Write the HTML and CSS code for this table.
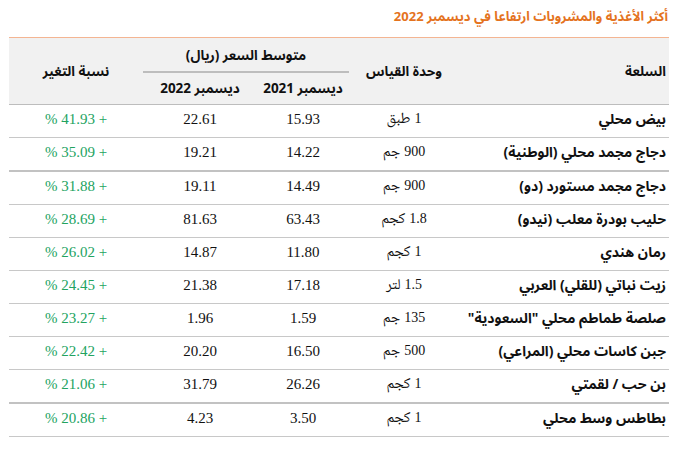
FILE: index.html
```html
<!DOCTYPE html>
<html lang="ar" dir="rtl">
<head>
<meta charset="utf-8">
<link rel="stylesheet" href="styles.css">
</head>
<body>
<div class="wrap">
  <h1 class="title">أكثر الأغذية والمشروبات ارتفاعا في ديسمبر 2022</h1>
  <table class="tbl">
    <colgroup>
      <col class="c-item"><col class="c-unit"><col class="c-p21"><col class="c-p22"><col class="c-chg">
    </colgroup>
    <thead>
      <tr class="h1">
        <th rowspan="2" class="th-item">السلعة</th>
        <th rowspan="2">وحدة القياس</th>
        <th colspan="2" class="th-price"><span class="price-label">متوسط السعر (ريال)</span></th>
        <th rowspan="2">نسبة التغير</th>
      </tr>
      <tr class="h2">
        <th>ديسمبر 2021</th>
        <th>ديسمبر 2022</th>
      </tr>
    </thead>
    <tbody>
      <tr><td class="item">بيض محلي</td><td class="unit"><span class="u"><span>1</span><span>طبق</span></span></td><td class="num">15.93</td><td class="num">22.61</td><td class="chg"><span class="pct">% 41.93 +</span></td></tr>
      <tr class="thick"><td class="item">دجاج مجمد محلي (الوطنية)</td><td class="unit"><span class="u"><span>900</span><span>جم</span></span></td><td class="num">14.22</td><td class="num">19.21</td><td class="chg"><span class="pct">% 35.09 +</span></td></tr>
      <tr><td class="item">دجاج مجمد مستورد (دو)</td><td class="unit"><span class="u"><span>900</span><span>جم</span></span></td><td class="num">14.49</td><td class="num">19.11</td><td class="chg"><span class="pct">% 31.88 +</span></td></tr>
      <tr><td class="item">حليب بودرة معلب (نيدو)</td><td class="unit"><span class="u"><span>1.8</span><span>كجم</span></span></td><td class="num">63.43</td><td class="num">81.63</td><td class="chg"><span class="pct">% 28.69 +</span></td></tr>
      <tr><td class="item">رمان هندي</td><td class="unit"><span class="u"><span>1</span><span>كجم</span></span></td><td class="num">11.80</td><td class="num">14.87</td><td class="chg"><span class="pct">% 26.02 +</span></td></tr>
      <tr><td class="item">زيت نباتي (للقلي) العربي</td><td class="unit"><span class="u"><span>1.5</span><span>لتر</span></span></td><td class="num">17.18</td><td class="num">21.38</td><td class="chg"><span class="pct">% 24.45 +</span></td></tr>
      <tr><td class="item">صلصة طماطم محلي "السعودية"</td><td class="unit"><span class="u"><span>135</span><span>جم</span></span></td><td class="num">1.59</td><td class="num">1.96</td><td class="chg"><span class="pct">% 23.27 +</span></td></tr>
      <tr><td class="item">جبن كاسات محلي (المراعي)</td><td class="unit"><span class="u"><span>500</span><span>جم</span></span></td><td class="num">16.50</td><td class="num">20.20</td><td class="chg"><span class="pct">% 22.42 +</span></td></tr>
      <tr class="thick"><td class="item">بن حب / لقمتي</td><td class="unit"><span class="u"><span>1</span><span>كجم</span></span></td><td class="num">26.26</td><td class="num">31.79</td><td class="chg"><span class="pct">% 21.06 +</span></td></tr>
      <tr><td class="item">بطاطس وسط محلي</td><td class="unit"><span class="u"><span>1</span><span>كجم</span></span></td><td class="num">3.50</td><td class="num">4.23</td><td class="chg"><span class="pct">% 20.86 +</span></td></tr>
    </tbody>
  </table>
</div>
</body>
</html>
```

FILE: styles.css
```css
html, body {
  margin: 0;
  padding: 0;
  background: #fff;
}
body {
  font-family: "Noto Sans Arabic", "Noto Kufi Arabic", "DejaVu Sans", sans-serif;
  color: #111;
  padding: 7px 8px 0 9px;
}
.wrap {
  width: 660px;
}
.title {
  margin: 0 1px 0 0;
  font-size: 13px;
  font-weight: bold;
  color: #e4731e;
  line-height: 20px;
  height: 30px;
  white-space: nowrap;
}
.tbl {
  width: 660px;
  border-collapse: collapse;
  table-layout: fixed;
  font-size: 13px;
  white-space: nowrap;
}
.c-item { width: 210px; }
.c-unit { width: 110px; }
.c-p21 { width: 92px; }
.c-p22 { width: 114px; }
.c-chg { width: 134px; }
thead tr.h1 th {
  border-top: 1px solid #f4b592;
}
thead th {
  background: #f1f1f1;
  font-weight: bold;
  font-size: 13.5px;
  text-align: center;
  padding: 0;
}
thead tr.h1 { height: 34px; }
thead tr.h2 { height: 33px; }
thead tr.h2 th,
thead th[rowspan] {
  border-bottom: 1px solid #bdbdbd;
}
.th-item {
  text-align: right;
  padding-right: 3px;
}
.th-price {
  border-bottom: 2px solid #bdbdbd;
  vertical-align: middle;
}
.price-label { display: inline-block; padding-top: 2px; }
tbody tr { height: 33px; }
tbody td {
  border-bottom: 1px solid #c8c8c8;
  padding: 0 0 3px 0;
  text-align: center;
  vertical-align: middle;
}
tbody tr.thick td {
  border-bottom: 2px solid #c2c2c2;
}
td.item {
  text-align: right;
  padding-right: 3px;
  font-weight: bold;
  font-size: 14px;
}
td.unit {
  font-family: "Noto Naskh Arabic", "Noto Sans Arabic", "DejaVu Sans", serif;
  font-size: 15px;
}
.u {
  display: inline-flex;
  direction: rtl;
  gap: 4px;
  align-items: baseline;
}
.u span:first-child {
  font-family: "Liberation Serif", serif;
  font-size: 14px;
}
td.num {
  font-family: "Liberation Serif", serif;
  font-size: 15px;
}
td.chg {
  font-family: "Liberation Serif", serif;
  font-size: 15px;
  color: #22a35f;
}
.pct {
  direction: ltr;
  unicode-bidi: bidi-override;
}
```
